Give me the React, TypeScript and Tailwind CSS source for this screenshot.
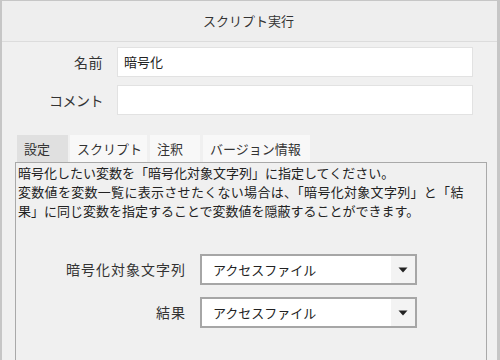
import React from "react";

const font = { fontFamily: '"Noto Sans CJK JP", "Noto Sans", sans-serif' };

function Select({ value }: { value: string }) {
  return (
    <div className="w-[217px] h-[31px] border-2 border-[#a6a6a6] bg-white flex items-stretch">
      <div className="flex-1 flex items-center pl-[11px] text-[13px] text-[#222]">{value}</div>
      <div className="w-[24px] bg-[#f3f3f3] flex items-center justify-center">
        <svg width="10" height="6" viewBox="0 0 10 6">
          <path d="M0.5 0.5 L9.5 0.5 L5 5.5 Z" fill="#222" />
        </svg>
      </div>
    </div>
  );
}

export default function App() {
  const tabs: { t: string; w: string; ml: string; sel?: boolean }[] = [
    { t: "設定", w: "w-[51px]", ml: "ml-0", sel: true },
    { t: "スクリプト", w: "w-[77px]", ml: "ml-[2px]" },
    { t: "注釈", w: "w-[50px]", ml: "ml-[3px]" },
    { t: "バージョン情報", w: "w-[107px]", ml: "ml-[3px]" },
  ];
  return (
    <div
      style={font}
      className="w-[500px] h-[360px] overflow-hidden bg-[#f0f0f0] border-t border-l-2 border-r-[3px] border-[#c6c6c6] text-[#333] box-border"
    >
      <div className="h-[41px] flex items-center justify-center border-b border-[#dcdcdc] bg-[#eeeeee] text-[13px] pr-[2px]">
        スクリプト実行
      </div>
      <div className="pt-[5px] flex flex-col gap-[8px]">
        <div className="flex items-center">
          <div className="w-[101px] text-right text-[14px] tracking-[0.5px]">名前</div>
          <div className="ml-[14px] w-[356px] h-[30px] bg-white border border-[#e2e2e2] flex items-center pl-[6px] text-[13px] text-[#222]">
            暗号化
          </div>
        </div>
        <div className="flex items-center">
          <div className="w-[101px] text-right text-[14px] tracking-[-0.5px]">コメント</div>
          <div className="ml-[14px] w-[356px] h-[30px] bg-white border border-[#e2e2e2]" />
        </div>
      </div>
      <div className="mt-[20px] ml-[13px]">
        <div className="flex pl-[2px] h-[27px]">
          {tabs.map((x) => (
            <div
              key={x.t}
              className={
                "h-full flex items-center pl-[7px] text-[13px] " +
                x.w +
                " " +
                x.ml +
                " " +
                (x.sel ? "bg-[#e0e0e0]" : "bg-[#f8f8f8]")
              }
            >
              {x.t}
            </div>
          ))}
        </div>
        <div className="w-[472px] h-[200px] border border-[#a9a9a9] bg-[#f0f0f0] pl-[2px] pt-[0px]">
          <div className="text-[13px] leading-[19px] text-[#222] whitespace-nowrap">
            <div>暗号化したい変数を「暗号化対象文字列」に指定してください。</div>
            <div className="tracking-[0.3px]">変数値を変数一覧に表示させたくない場合は、「暗号化対象文字列」と「結</div>
            <div>果」に同じ変数を指定することで変数値を隠蔽することができます。</div>
          </div>
          <div className="mt-[34px] flex flex-col gap-[12px]">
            <div className="flex items-center">
              <div className="w-[168px] text-right text-[14px] tracking-[1px]">暗号化対象文字列</div>
              <div className="ml-[14px]">
                <Select value="アクセスファイル" />
              </div>
            </div>
            <div className="flex items-center">
              <div className="w-[168px] text-right text-[14px] tracking-[1px]">結果</div>
              <div className="ml-[14px]">
                <Select value="アクセスファイル" />
              </div>
            </div>
          </div>
        </div>
      </div>
    </div>
  );
}
